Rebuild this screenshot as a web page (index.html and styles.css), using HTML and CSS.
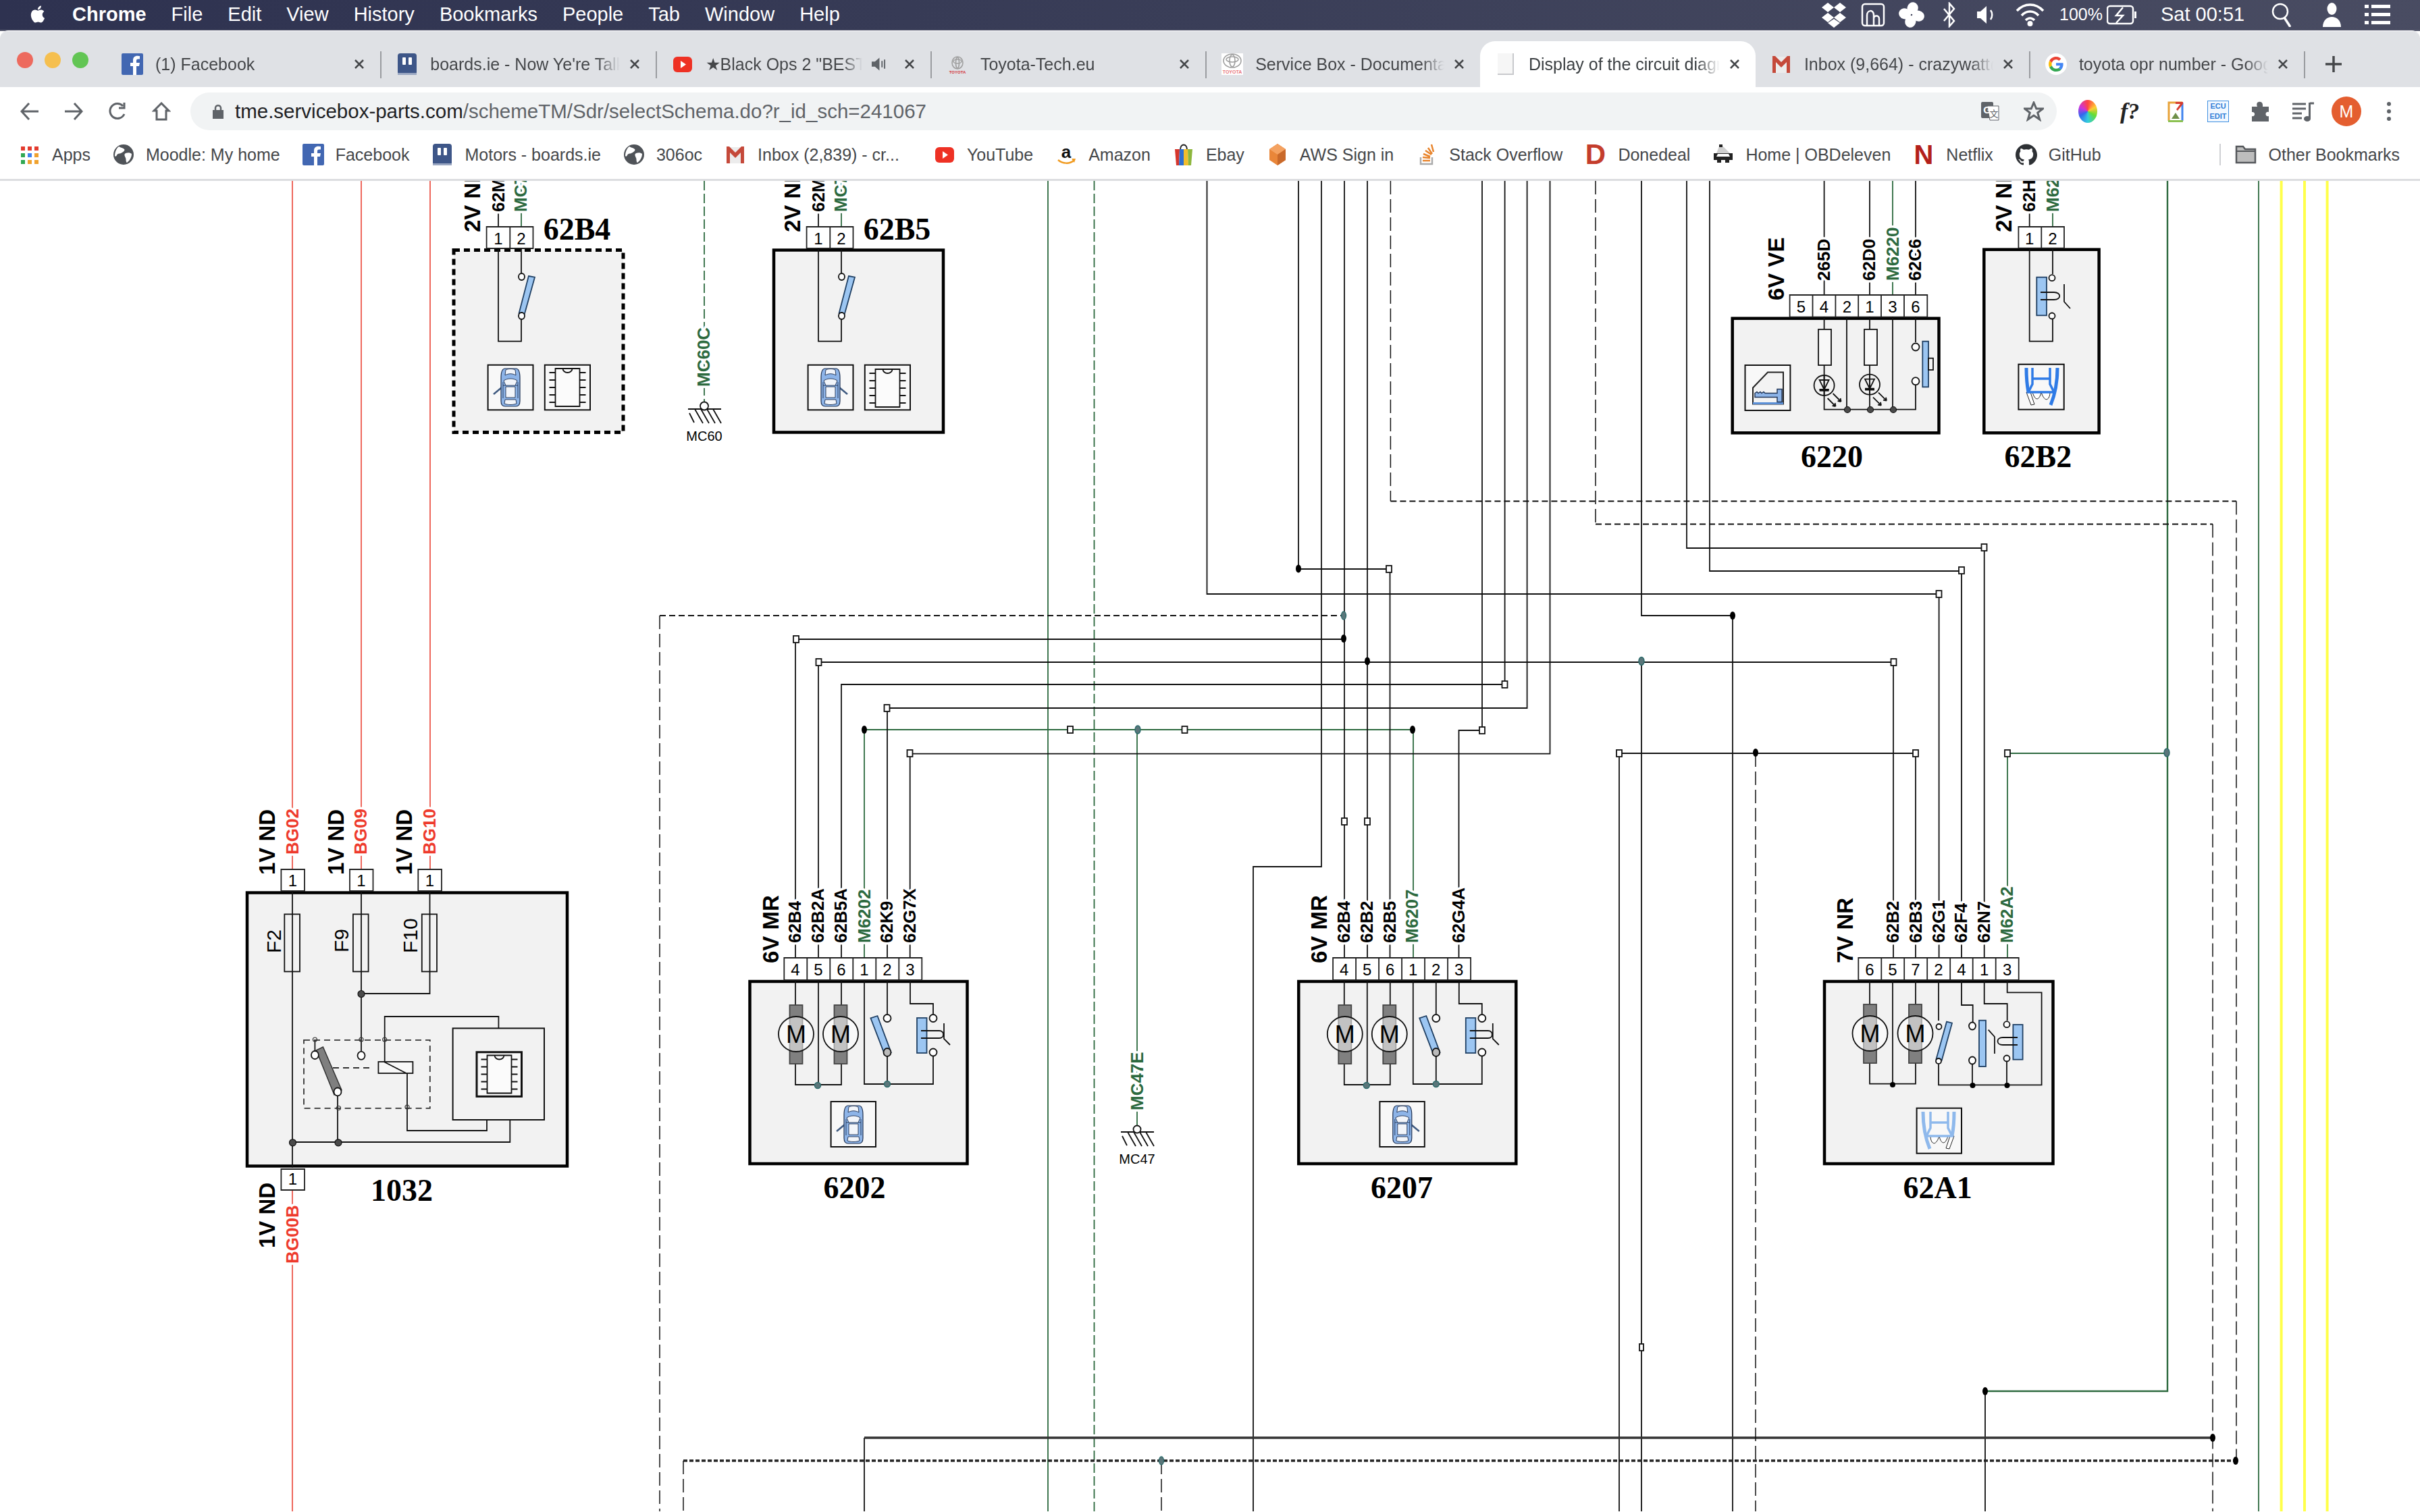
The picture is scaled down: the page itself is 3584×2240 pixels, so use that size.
FILE: index.html
```html
<!DOCTYPE html>
<html lang="en">
<head>
<meta charset="utf-8">
<title>Display of the circuit diagram</title>
<link rel="stylesheet" href="styles.css">
</head>
<body>
<svg class="sprite" aria-hidden="true">
  <symbol id="i-fb" viewBox="0 0 32 32"><rect width="32" height="32" rx="2" fill="#4267b2"/><path fill="#fff" d="M22 32V19h4l1-5h-5v-3c0-1.500.6-2.500 2.500-2.500H27V4c-.6 0-2-.3-3.700-.3C19.500 3.700 17 6 17 10.200V14h-4v5h4v13z"/></symbol>
  <symbol id="i-boards" viewBox="0 0 32 32"><rect x="2" width="28" height="32" rx="4" fill="#3e5688"/><rect x="2" y="29" width="28" height="3" fill="#9aa7c2"/><rect x="9" y="6" width="5" height="11" rx="1" fill="#fff"/><rect x="18" y="6" width="5" height="11" rx="1" fill="#fff"/></symbol>
  <symbol id="i-yt" viewBox="0 0 32 32"><rect x="2" y="5" width="28" height="23" rx="6" fill="#ee3124"/><path fill="#fff" d="M13 11l8 5.500-8 5.500z"/></symbol>
  <symbol id="i-globe" viewBox="0 0 32 32"><circle cx="16" cy="16" r="15" fill="#4f5358"/><path fill="#fff" d="M9 4c3 2 6 2 8 4s-3 5-5 6-5 0-6 3c-1 2-2 2-3 1 0-5 2-11 6-14zM19 14c3-1 7-1 9 1 0 5-3 10-7 13-2-1-1-5-2-7-1-3-3-5 0-7z"/></symbol>
  <symbol id="i-gmail" viewBox="0 0 32 32"><path fill="#ececec" d="M4 5h24v24H4z"/><path fill="#c5493a" d="M3 4h4l9 9 9-9h4v25h-5V13l-8 8-8-8v16H3z"/></symbol>
  <symbol id="i-google" viewBox="0 0 32 32"><circle cx="16" cy="16" r="16" fill="#fff"/><g transform="translate(5 5) scale(.46)"><path fill="#EA4335" d="M24 9.500c3.540 0 6.710 1.220 9.210 3.600l6.850-6.850C35.900 2.380 30.470 0 24 0 14.620 0 6.510 5.380 2.560 13.220l7.980 6.190C12.430 13.720 17.740 9.500 24 9.500z"/><path fill="#4285F4" d="M46.980 24.550c0-1.570-.15-3.090-.38-4.550H24v9.020h12.940c-.58 2.960-2.260 5.480-4.780 7.180l7.730 6c4.510-4.180 7.090-10.360 7.090-17.650z"/><path fill="#FBBC05" d="M10.530 28.590c-.48-1.450-.76-2.990-.76-4.590s.27-3.140.76-4.590l-7.980-6.190C.92 16.460 0 20.120 0 24c0 3.880.92 7.540 2.560 10.780l7.970-6.190z"/><path fill="#34A853" d="M24 48c6.480 0 11.930-2.130 16.030-5.810l-7.730-6c-2.150 1.450-4.920 2.300-8.300 2.300-6.260 0-11.570-4.220-13.470-9.910l-7.980 6.190C6.510 42.620 14.620 48 24 48z"/></g></symbol>
  <symbol id="i-page" viewBox="0 0 32 32"><path fill="#f6f6f6" d="M4 0h22v32H4z"/><path fill="#c8c9cc" d="M26 0h2v32H4v-2h22z"/></symbol>
  <symbol id="i-apps" viewBox="0 0 32 32"><path fill="#e33b2e" d="M3 4h6v6H3zM13 4h6v6h-6zM23 4h6v6h-6z"/><path fill="#f0a22e" d="M23 14h6v6h-6zM23 24h6v6h-6zM13 24h6v6h-6z"/><path fill="#3f83ee" d="M13 14h6v6h-6z"/><path fill="#30a853" d="M3 14h6v6H3zM3 24h6v6H3z"/></symbol>
  <symbol id="i-ebay" viewBox="0 0 32 32"><path fill="none" stroke="#222" stroke-width="2" d="M11 9c0-10 10-10 10 0"/><path fill="#d6362c" d="M3 8h7l-1 24H5z"/><path fill="#2f6fd0" d="M10 8h6v24H9z"/><path fill="#f2bd2c" d="M16 8h6l1 24h-7z"/><path fill="#8cb63c" d="M22 8h7l-2 24h-4z"/></symbol>
  <symbol id="i-aws" viewBox="0 0 32 32"><path fill="#e98639" d="M16 0l12 8v16l-12 8L4 24V8z"/><path fill="#f4a261" d="M16 0l12 8-12 8L4 8z"/><path fill="#c9692a" d="M16 16v16l12-8V8z"/></symbol>
  <symbol id="i-stack" viewBox="0 0 32 32"><path fill="none" stroke="#e8842c" stroke-width="2.500" d="M10 25h11M10 20l11 1M11 15l10 4M14 10l9 6M18 6l6 9M23 1l3 11"/><path fill="none" stroke="#aaa" stroke-width="2.500" d="M7 20v10h17V20"/></symbol>
  <symbol id="i-obd" viewBox="0 0 32 32"><path fill="#cfcfcf" d="M10 4h6l10 10H6z"/><path fill="#222" d="M10 1h5v4h-5zM2 14h28v10H2zM7 24h6v4H7zM19 24h6v4h-6z"/><path fill="#fff" d="M8 15h16l2 4H6z"/></symbol>
  <symbol id="i-gh" viewBox="0 0 24 24"><path fill="#2e3135" d="M12 .297c-6.630 0-12 5.373-12 12 0 5.303 3.438 9.800 8.205 11.385.6.113.82-.258.82-.577 0-.285-.01-1.040-.015-2.040-3.338.724-4.042-1.610-4.042-1.610C4.422 18.070 3.633 17.700 3.633 17.700c-1.087-.744.084-.729.084-.729 1.205.084 1.838 1.236 1.838 1.236 1.070 1.835 2.809 1.305 3.495.998.108-.776.417-1.305.76-1.605-2.665-.3-5.466-1.332-5.466-5.930 0-1.310.465-2.380 1.235-3.220-.135-.303-.54-1.523.105-3.176 0 0 1.005-.322 3.300 1.230.96-.267 1.980-.399 3-.405 1.020.006 2.040.138 3 .405 2.280-1.552 3.285-1.230 3.285-1.230.645 1.653.24 2.873.12 3.176.765.84 1.230 1.910 1.230 3.220 0 4.610-2.805 5.625-5.475 5.920.42.36.81 1.096.81 2.220 0 1.606-.015 2.896-.015 3.286 0 .315.21.69.825.57C20.565 22.092 24 17.592 24 12.297c0-6.627-5.373-12-12-12"/></symbol>
  <symbol id="i-folder" viewBox="0 0 32 32"><path fill="#bdbdbd" stroke="#55585c" stroke-width="2.500" d="M2 4h10l3 4h15v20H2z"/><path fill="none" stroke="#55585c" stroke-width="2" d="M2 11h28"/></symbol>
</svg>

<header class="menubar">
  <svg class="apple" viewBox="0 0 24 24"><path d="M18.710 19.500c-.83 1.240-1.710 2.450-3.050 2.470-1.340.03-1.770-.79-3.290-.79-1.530 0-2 .77-3.270.82-1.310.05-2.300-1.320-3.140-2.530C4.250 17 2.940 12.450 4.700 9.390c.87-1.520 2.430-2.480 4.120-2.510 1.280-.02 2.500.87 3.290.87.78 0 2.260-1.070 3.810-.91.65.03 2.470.26 3.640 1.980-.09.06-2.170 1.280-2.150 3.810.03 3.020 2.650 4.030 2.680 4.040-.03.07-.42 1.440-1.380 2.830M13 3.500c.73-.83 1.940-1.460 2.940-1.500.13 1.170-.34 2.350-1.040 3.190-.69.85-1.830 1.510-2.950 1.420-.15-1.150.41-2.350 1.050-3.110z"/></svg>
  <nav class="menus">
    <span class="menu-app">Chrome</span><span>File</span><span>Edit</span><span>View</span><span>History</span><span>Bookmarks</span><span>People</span><span>Tab</span><span>Window</span><span>Help</span>
  </nav>
  <div class="status">
    <svg class="st st-drop" viewBox="0 0 38 38"><path d="M10 1l9 7-9 7-9-7zM28 1l9 7-9 7-9-7zM10 16l9 7-9 7-9-7zM28 16l9 7-9 7-9-7zM19 25l9 6-9 7-9-7z"/></svg>
    <svg class="st st-air" viewBox="0 0 36 36"><rect class="ln" x="2" y="2" width="32" height="32" rx="4"/><path class="ln" d="M9 34V19c0-9 10-9 10-1v16M19 34V24c0-6 8-6 8 0v10"/></svg>
    <svg class="st st-fan" viewBox="0 0 38 38"><ellipse cx="18" cy="9" rx="8" ry="9" transform="rotate(15 19 19)"/><ellipse cx="18" cy="9" rx="8" ry="9" transform="rotate(105 19 19)"/><ellipse cx="18" cy="9" rx="8" ry="9" transform="rotate(195 19 19)"/><ellipse cx="18" cy="9" rx="8" ry="9" transform="rotate(285 19 19)"/></svg>
    <svg class="st st-bt" viewBox="0 0 20 38"><path class="ln" d="M2 10l15 18-7 8V2l7 8L2 28"/></svg>
    <svg class="st st-vol" viewBox="0 0 27 30"><path d="M0 10h5l9-8v26l-9-8H0z"/><path class="ln" d="M20 8c3 4 3 10 0 14"/></svg>
    <svg class="st st-wifi" viewBox="0 0 43 36"><path class="ln3" d="M2 12c11-12 28-12 39 0M9 19c7-8 18-8 25 0M15 26c4-4 9-4 13 0"/><circle cx="21.500" cy="31" r="4"/></svg>
    <span class="st-pct">100%</span>
    <svg class="st st-bat" viewBox="0 0 45 30"><rect class="ln" x="1" y="2" width="38" height="26" rx="4"/><rect x="41" y="10" width="3" height="10"/><path class="ln" fill="none" d="M24 4L14 16h10L14 27"/></svg>
    <span class="st-clock">Sat 00:51</span>
    <svg class="st st-search" viewBox="0 0 29 36"><circle class="ln" cx="13" cy="13" r="11"/><path class="ln3" d="M19 22l9 14"/></svg>
    <svg class="st st-user" viewBox="0 0 27 36"><ellipse cx="13.500" cy="9" rx="7" ry="9"/><path d="M0 36c0-20 27-20 27 0z"/></svg>
    <svg class="st st-list" viewBox="0 0 38 32"><path d="M0 1h6v5H0zM10 1h28v5H10zM0 13h6v5H0zM10 13h28v5H10zM0 25h6v5H0zM10 25h28v5H10z"/></svg>
  </div>
</header>

<div class="tabstrip">
  <div class="lights"><i class="l-red"></i><i class="l-yel"></i><i class="l-grn"></i></div>
  <div class="tab"><svg class="tab-ic"><use href="#i-fb"/></svg><span class="tab-title">(1) Facebook</span><svg class="tab-x" viewBox="0 0 16 16"><path d="M2 2l12 12M14 2L2 14"/></svg></div><i class="tab-sep"></i>
  <div class="tab"><svg class="tab-ic"><use href="#i-boards"/></svg><span class="tab-title">boards.ie - Now Ye're Talking</span><svg class="tab-x" viewBox="0 0 16 16"><path d="M2 2l12 12M14 2L2 14"/></svg></div><i class="tab-sep"></i>
  <div class="tab"><svg class="tab-ic"><use href="#i-yt"/></svg><span class="tab-title">★Black Ops 2 "BEST CLASS"</span><svg class="tab-spk" viewBox="0 0 22 20"><path d="M0 6h5l7-6v20l-7-6H0z"/><path d="M15 5h2v10h-2zM19 3h2v14h-2z"/></svg><svg class="tab-x" viewBox="0 0 16 16"><path d="M2 2l12 12M14 2L2 14"/></svg></div><i class="tab-sep"></i>
  <div class="tab"><svg class="tab-ic" viewBox="0 0 32 32"><ellipse class="ty" cx="16" cy="14" rx="8" ry="9"/><ellipse class="ty" cx="16" cy="12" rx="6" ry="3"/><ellipse class="ty" cx="16" cy="14" rx="2.500" ry="8"/><text class="toyota" x="16" y="30">TOYOTA</text></svg><span class="tab-title">Toyota-Tech.eu</span><svg class="tab-x" viewBox="0 0 16 16"><path d="M2 2l12 12M14 2L2 14"/></svg></div><i class="tab-sep"></i>
  <div class="tab tab-sb"><svg class="tab-ic tab-white" viewBox="0 0 32 32"><ellipse class="ty" cx="16" cy="11" rx="13" ry="10"/><ellipse class="ty" cx="16" cy="9" rx="9" ry="4"/><ellipse class="ty" cx="16" cy="11" rx="4" ry="9"/><text class="toyota toyota-l" x="16" y="30">TOYOTA</text></svg><span class="tab-title">Service Box - Documentation</span><svg class="tab-x" viewBox="0 0 16 16"><path d="M2 2l12 12M14 2L2 14"/></svg></div>
  <div class="tab tab-active"><svg class="tab-ic"><use href="#i-page"/></svg><span class="tab-title">Display of the circuit diagram</span><svg class="tab-x" viewBox="0 0 16 16"><path d="M2 2l12 12M14 2L2 14"/></svg></div>
  <div class="tab tab-mail"><svg class="tab-ic"><use href="#i-gmail"/></svg><span class="tab-title">Inbox (9,664) - crazywatt@gmail</span><svg class="tab-x" viewBox="0 0 16 16"><path d="M2 2l12 12M14 2L2 14"/></svg></div><i class="tab-sep"></i>
  <div class="tab"><svg class="tab-ic"><use href="#i-google"/></svg><span class="tab-title">toyota opr number - Google</span><svg class="tab-x" viewBox="0 0 16 16"><path d="M2 2l12 12M14 2L2 14"/></svg></div><i class="tab-sep"></i>
  <svg class="tab-plus" viewBox="0 0 24 24"><path d="M12 0v24M0 12h24"/></svg>
</div>

<div class="toolbar">
  <svg class="nav" viewBox="0 0 28 28"><path d="M27 14H2M13 2L2 14l11 12"/></svg>
  <svg class="nav" viewBox="0 0 28 28"><path d="M1 14h25M15 2l11 12-11 12"/></svg>
  <svg class="nav" viewBox="0 0 28 28"><path d="M24 18A11 11 0 1 1 22 6M24 1v8h-8"/></svg>
  <svg class="nav" viewBox="0 0 28 28"><path d="M14 2L3 13h4v13h14V13h4z"/></svg>
  <div class="omni">
    <svg class="lock" viewBox="0 0 16 22"><path class="lock-b" d="M0 9h16v13H0z"/><path class="lock-s" d="M4 9V6c0-5 8-5 8 0v3"/></svg>
    <span class="url"><b>tme.servicebox-parts.com</b>/schemeTM/Sdr/selectSchema.do?r_id_sch=241067</span>
    <svg class="omni-tr" viewBox="0 0 28 28"><rect x="1" y="0" width="18" height="24" rx="2" fill="#5f6368"/><path fill="#fff" stroke="#5f6368" d="M10 6h17v21H14z"/><text class="tr-g" x="10" y="17">G</text><text class="tr-z" x="20" y="22">文</text></svg>
    <svg class="omni-star" viewBox="0 0 30 30"><path d="M15 2l3.800 9h9.700l-7.800 6 3 10L15 21 6.300 27l3-10L1.500 11h9.700z"/></svg>
  </div>
  <div class="ext">
    <i class="wheel"></i>
    <span class="fq">f?</span>
    <svg class="ex ex-img" viewBox="0 0 32 32"><path fill="none" stroke="#e8a33a" stroke-width="3" d="M6 30V3h20"/><path fill="none" stroke="#3f83ee" stroke-width="3" d="M26 3v27"/><path fill="#d63b2e" d="M16 2h11v3l-8 10-2-2 6-8h-7z"/><path fill="#8cc152" d="M5 29h22v3H5z"/><path fill="#6f8f47" d="M10 27l6-9 6 9z"/></svg>
    <div class="ecu"><span>ECU</span><span>EDIT</span></div>
    <svg class="ex" viewBox="0 0 32 32"><path fill="#5f6368" d="M11 3c5-3 9 0 8 6h9v8c-6-2-6 8 0 6v8H3v-8c5 2 6-7 0-6V9h8c-1-2-1-4 0-6z"/></svg>
    <svg class="ex" viewBox="0 0 32 32"><path fill="none" stroke="#5f6368" stroke-width="3" d="M0 5h20M0 12h20M0 19h14M0 26h14M26 4h6"/><path fill="#5f6368" d="M24 3h3v24h-3z"/><ellipse cx="22" cy="27" rx="5" ry="4" fill="#5f6368"/></svg>
    <span class="avatar">M</span>
    <svg class="dots" viewBox="0 0 6 28"><circle cx="3" cy="3" r="3"/><circle cx="3" cy="14" r="3"/><circle cx="3" cy="25" r="3"/></svg>
  </div>
</div>

<nav class="bookmarks">
  <a class="bm"><svg><use href="#i-apps"/></svg>Apps</a>
  <a class="bm"><svg><use href="#i-globe"/></svg>Moodle: My home</a>
  <a class="bm"><svg><use href="#i-fb"/></svg>Facebook</a>
  <a class="bm"><svg><use href="#i-boards"/></svg>Motors - boards.ie</a>
  <a class="bm"><svg><use href="#i-globe"/></svg>306oc</a>
  <a class="bm bm-inbox"><svg><use href="#i-gmail"/></svg>Inbox (2,839) - cr...</a>
  <a class="bm"><svg><use href="#i-yt"/></svg>YouTube</a>
  <a class="bm"><svg viewBox="0 0 32 32"><text class="amazon" x="16" y="21">a</text><path fill="none" stroke="#f09a1e" stroke-width="2.500" d="M4 24c7 6 17 6 23 1"/><path fill="#f09a1e" d="M24 22l6 0-2 6z"/></svg>Amazon</a>
  <a class="bm"><svg><use href="#i-ebay"/></svg>Ebay</a>
  <a class="bm"><svg><use href="#i-aws"/></svg>AWS Sign in</a>
  <a class="bm"><svg><use href="#i-stack"/></svg>Stack Overflow</a>
  <a class="bm"><svg viewBox="0 0 32 32"><text class="done" x="16" y="30">D</text></svg>Donedeal</a>
  <a class="bm"><svg><use href="#i-obd"/></svg>Home | OBDeleven</a>
  <a class="bm"><svg viewBox="0 0 32 32"><text class="netflix" x="16" y="30">N</text></svg>Netflix</a>
  <a class="bm"><svg><use href="#i-gh"/></svg>GitHub</a>
  <i class="bm-sep"></i>
  <a class="bm bm-other"><svg><use href="#i-folder"/></svg>Other Bookmarks</a>
</nav>

<main class="page">
<svg class="schema" viewBox="0 269 3584 1971" xmlns="http://www.w3.org/2000/svg">
  <defs>
    <g id="car">
      <path class="door" d="M-25 10L-13 0"/>
      <path class="c-body" d="M-8-28C-12-28-14-23-14-14V20C-14 26-12 28-8 28H8C12 28 14 26 14 20V-14C14-23 12-28 8-28Z"/>
      <path class="c-win" d="M-7-26C-4-28 4-28 7-26L8-18C3-21-3-21-8-18ZM-10-10C-5-14 5-14 10-10L7-3H-7ZM-7-1H7V15H-7ZM-8 18H8L9 24C4 26-4 26-9 24Z"/>
      <path class="c-ln" d="M-11-8V16M11-8V16M-11-3H-7M7-3H11"/>
    </g>
    <g id="car-r">
      <path class="door" d="M25 10L13 0"/>
      <path class="c-body" d="M-8-28C-12-28-14-23-14-14V20C-14 26-12 28-8 28H8C12 28 14 26 14 20V-14C14-23 12-28 8-28Z"/>
      <path class="c-win" d="M-7-26C-4-28 4-28 7-26L8-18C3-21-3-21-8-18ZM-10-10C-5-14 5-14 10-10L7-3H-7ZM-7-1H7V15H-7ZM-8 18H8L9 24C4 26-4 26-9 24Z"/>
      <path class="c-ln" d="M-11-8V16M11-8V16M-11-3H-7M7-3H11"/>
    </g>
    <g id="chip">
      <path class="notch" d="M-18-28H18V28H-18Z"/>
      <path class="w" d="M-7-28A7 6 0 0 0 7-28M-18-22H-27M-18-11H-27M-18 0H-27M-18 11H-27M-18 22H-27M18-22H27M18-11H27M18 0H27M18 11H27M18 22H27"/>
    </g>
    <g id="seat">
      <path class="s-thin" d="M16 8L22 8L15 27L10 26ZM-13 8C-13 18-6 26 0 8C2 18 8 24 13 8"/>
      <path class="s-blue" d="M-24-28C-24-10-21 10-14 27M22-28C22-12 21-2 19 8"/>
      <path class="s-mid" d="M-13-28V-4L-19 8H19L13-4V-28M-13-12H13"/>
    </g>
    <g id="ground">
      <path class="w" d="M-24 0H25M-22 6L-15 20M-14 0L-2 21M-5 0L7 21M4 0L16 21M13 0L25 21"/>
    </g>
    <g id="motor">
      <rect class="m-core" x="-9.500" y="-43" width="19" height="87"/>
      <circle class="m-ring" r="26"/>
    </g>
    <g id="led">
      <circle class="c-w" r="15"/>
      <path class="w" d="M0-15V15M-7-8H7L0 6ZM-7 6H7"/>
      <path class="led-bar" d="M-7 7H7"/>
      <path class="w" d="M13 12L25 24M5 19L17 31M25 24l-5-1M25 24l-1-5M17 31l-5-1M17 31l-1-5"/>
    </g>
    <g id="mr-unit">
      <rect class="box" x="1110.500" y="1455" width="322" height="270"/>
      <path class="pin" d="M1161.300 1420h34v33h-34zM1195.300 1420h34v33h-34zM1229.300 1420h34v33h-34zM1263.300 1420h34v33h-34zM1297.300 1420h34v33h-34zM1331.300 1420h34v33h-34z"/>
      <path class="w" d="M1178 1453V1490M1246 1453V1490M1178 1576V1608H1246V1576M1212 1453V1608M1280 1453V1607H1382V1566M1314 1453V1503M1314 1566V1607M1348 1453V1488H1382V1503"/>
      <use href="#motor" x="1179" y="1533"/><use href="#motor" x="1245" y="1533"/>
      <circle class="nt" cx="1211" cy="1609" r="4.500"/><circle class="nt" cx="1314" cy="1607" r="4.500"/>
      <path class="blue" d="M1289.400 1509.300L1299.500 1506L1319.700 1560L1309.600 1561.700Z"/>
      <ellipse class="c-o" cx="1314" cy="1509.500" rx="5.500" ry="5.500"/><ellipse class="c-o c-s" cx="1314" cy="1560" rx="5.500" ry="6"/>
      <ellipse class="c-o" cx="1382" cy="1509.500" rx="5.500" ry="5.500"/><ellipse class="c-o" cx="1382" cy="1560" rx="5.500" ry="5.500"/>
      <rect class="blue" x="1358" y="1509" width="14.500" height="52"/>
      <path class="w" d="M1364 1528H1391C1399 1528 1399 1539 1391 1539H1364M1398 1517V1540L1407 1549"/>
      <rect class="icb" x="1230.600" y="1633" width="66.400" height="67"/>
    </g>
  </defs>

  <path class="y" d="M3378.600 269V2240M3413 269V2240M3446.600 269V2240"/>
  <path class="r" d="M433 269V1290M535 269V1290M637 269V1290M433 1764V2240"/>
  <path class="g" d="M1552 269V2240M3345 269V2240M1280 1082H2093M1280 1082V1420M2093 1082V1420M1684 1082V1670M2973 1117H3210M2973 1117V1420M772 269V337M1246 269V337M3040 269V337M2803 269V438"/>
  <path class="g g-t" d="M3210 269V2062H2940"/>
  <path class="g gd" d="M1620.500 269V2240M1043 269V597"/>
  <path class="w" d="M1787.500 269V881H2871.600V1420M1957 269V1285H1856V2240M1923 269V844H2058.500V1420M1991 269V1420M2025 269V1420M2195 269V1083H2160.500V1420M2228.600 269V1015H1246V1420M2261.600 269V1050H1314V1420M2295.500 269V1117.700H1347.700V1420M1178 948H1991M1178 948V1420M1212 982H2804V1420M1212 982V1420M2498 269V813H2938.700V1420M2532 269V847H2905V1420M2431 269V913H2566V2240M2431 981V2240M2398 2240V1117H2837V1420M2701.600 269V438M2769 269V438M2837 269V438M738 269V337M1212 269V337M3005.700 269V337M1280 2131V2240M2940 2062V2240"/>
  <path class="bus" d="M1280 2131H3278"/>
  <path class="dv" d="M2059.400 269V743.500M3312 743.500V2165M2363 269V777.600M3277 777.600V2240M977 913V2240M1012 2165V2240M1720 2165V2240M2600 1117V2240"/>
  <path class="dh" d="M2059.400 743.500H3312M2363 777.600H3277M977 913H1990"/>
  <path class="dh dh-t" d="M1012 2165H3311"/>

  <g class="sq-all">
    <rect x="1175" y="943" width="8" height="10"/><rect x="1208.500" y="977" width="8" height="10"/><rect x="1309.500" y="1045" width="8" height="10"/><rect x="1343.500" y="1112" width="8" height="10"/><rect x="2224.500" y="1010" width="8" height="10"/><rect x="2191" y="1078" width="8" height="10"/><rect x="2053" y="839" width="8" height="10"/><rect x="2867.500" y="876" width="8" height="10"/><rect x="2800.500" y="977" width="8" height="10"/><rect x="2901" y="841" width="8" height="10"/><rect x="2934.500" y="807" width="8" height="10"/><rect x="2394" y="1112" width="8" height="10"/><rect x="2833" y="1112" width="8" height="10"/><rect x="2969" y="1112" width="8" height="10"/><rect x="1581" y="1077" width="8" height="10"/><rect x="1750.500" y="1077" width="8" height="10"/><rect x="1987" y="1213" width="8" height="10"/><rect x="2021" y="1213" width="8" height="10"/><rect x="2428" y="1992" width="6" height="10"/>
  </g>
  <g class="nb-all">
    <ellipse cx="1923" cy="843.500" rx="4" ry="6"/><ellipse cx="1990" cy="947" rx="4" ry="6"/><ellipse cx="2025" cy="980.500" rx="4" ry="6"/><ellipse cx="1280" cy="1082" rx="4" ry="6"/><ellipse cx="2092" cy="1082" rx="4" ry="6"/><ellipse cx="2566" cy="913" rx="4" ry="6"/><ellipse cx="2600" cy="1116" rx="4" ry="6"/><ellipse cx="2940" cy="2062" rx="4" ry="6"/><ellipse cx="3277" cy="2131" rx="4" ry="6"/><ellipse cx="3311" cy="2165" rx="4" ry="6"/>
  </g>
  <g class="nt-all">
    <ellipse cx="1990" cy="913" rx="3.500" ry="6"/><ellipse cx="1685" cy="1082" rx="4" ry="6"/><ellipse cx="2431" cy="980.500" rx="4" ry="6"/><ellipse cx="3209" cy="1116" rx="4" ry="6"/><ellipse cx="1720" cy="2165" rx="3.500" ry="6"/>
  </g>

  <!-- 62B4 -->
  <rect class="box box-d" x="672" y="371.500" width="251" height="270"/>
  <path class="pin" d="M720.600 337h34.700v32h-34.700zM755.300 337h34.200v32h-34.200z"/>
  <text class="no" x="738" y="363">1</text><text class="no" x="772" y="363">2</text>
  <path class="w" d="M738 369V506.700H772V473M772 369V406"/>
  <path class="blue" d="M782.900 410L792 411.700L776.700 466.700L768.600 465Z"/>
  <ellipse class="c-o" cx="772.500" cy="411" rx="4.500" ry="5"/><ellipse class="c-o" cx="772.500" cy="469" rx="4.500" ry="5"/>
  <rect class="icb" x="722.600" y="541.700" width="66.900" height="66.600"/>
  <use href="#car" x="756" y="575"/>
  <rect class="icb" x="806.800" y="541.700" width="67.200" height="66.600"/>
  <use href="#chip" x="840.500" y="575"/>
  <text class="hd" transform="translate(711.400 345) rotate(-90)">2V ND</text>
  <text class="lb" transform="translate(747 315) rotate(-90)">62M0</text>
  <text class="lb lg" transform="translate(780 315) rotate(-90)">MC7</text>
  <text class="tt" x="854.500" y="356">62B4</text>

  <!-- 62B5 -->
  <rect class="box" x="1146" y="371.500" width="251" height="270"/>
  <path class="pin" d="M1194.600 337h34.700v32h-34.700zM1229.300 337h34.200v32h-34.200z"/>
  <text class="no" x="1212" y="363">1</text><text class="no" x="1246" y="363">2</text>
  <path class="w" d="M1212 369V506.700H1246V473M1246 369V406"/>
  <path class="blue" d="M1256.900 410L1266 411.700L1250.700 466.700L1242.600 465Z"/>
  <ellipse class="c-o" cx="1246.500" cy="411" rx="4.500" ry="5"/><ellipse class="c-o" cx="1246.500" cy="469" rx="4.500" ry="5"/>
  <rect class="icb" x="1196.600" y="541.700" width="66.900" height="66.600"/>
  <use href="#car-r" x="1230" y="575"/>
  <rect class="icb" x="1280.800" y="541.700" width="67.200" height="66.600"/>
  <use href="#chip" x="1314.500" y="576"/>
  <text class="hd" transform="translate(1185.400 345) rotate(-90)">2V ND</text>
  <text class="lb" transform="translate(1221 315) rotate(-90)">62M1</text>
  <text class="lb lg" transform="translate(1254 315) rotate(-90)">MC7</text>
  <text class="tt" x="1328.500" y="356">62B5</text>

  <!-- MC60 -->
  <use href="#ground" x="1043" y="607"/>
  <circle class="c-o" cx="1043" cy="602.500" r="6"/>
  <text class="lb lg" transform="translate(1050.700 574) rotate(-90)">MC60C</text>
  <text class="gnd" x="1043" y="654">MC60</text>

  <!-- 6220 -->
  <rect class="box" x="2565.700" y="472.700" width="305.800" height="169.600"/>
  <path class="pin" d="M2650.600 438h33.900v32.700h-33.900zM2684.500 438h33.900v32.700h-33.900zM2718.400 438h33.800v32.700h-33.800zM2752.200 438h33.800v32.700h-33.800zM2786 438h34v32.700h-34zM2820 438h34.300v32.700h-34.300z"/>
  <text class="no" x="2667.500" y="464">5</text><text class="no" x="2701.500" y="464">4</text><text class="no" x="2735.500" y="464">2</text><text class="no" x="2769" y="464">1</text><text class="no" x="2803" y="464">3</text><text class="no" x="2837" y="464">6</text>
  <path class="w" d="M2701.600 470V489M2769 470V489M2735 470V607.700M2803 470V607.700M2701.600 542V607.700H2837V571M2837 470V508M2769 542V607.700"/>
  <rect class="res" x="2693" y="489" width="19" height="53"/><rect class="res" x="2761" y="489" width="19" height="53"/>
  <use href="#led" x="2701.600" y="572"/><use href="#led" x="2769" y="570.700"/>
  <ellipse class="nb-g" cx="2736" cy="608" rx="4.500" ry="4.500"/><ellipse class="nb-g" cx="2770" cy="608" rx="4.500" ry="4.500"/><ellipse class="nb-g" cx="2804" cy="608" rx="4.500" ry="4.500"/>
  <ellipse class="c-o" cx="2837" cy="515" rx="5.500" ry="5.500"/><ellipse class="c-o" cx="2837" cy="565.700" rx="5.500" ry="5.500"/>
  <rect class="blue" x="2847.300" y="506.700" width="8.700" height="67.600"/><rect class="res" x="2856" y="531.700" width="7" height="17.300"/>
  <rect class="icb" x="2584.500" y="542" width="66.900" height="67"/>
  <g transform="translate(2618 575.500)">
    <path class="dr" d="M-22 0L0-23H23V24H-22Z"/><path class="dr-b" d="M-22 23H23"/>
    <path class="key" d="M-19 8l3-2 2 2 3-2 2 2 3-2 2 2H14V2H21V21H14V14H-19Z"/>
  </g>
  <text class="hd" transform="translate(2641.600 446) rotate(-90)">6V VE</text>
  <text class="lb" transform="translate(2709.800 417) rotate(-90)">265D</text>
  <text class="lb" transform="translate(2777 417) rotate(-90)">62D0</text>
  <text class="lb lg" transform="translate(2812 417) rotate(-90)">M6220</text>
  <text class="lb" transform="translate(2844.500 417) rotate(-90)">62C6</text>
  <text class="tt" x="2713" y="692.500">6220</text>

  <!-- 62B2 -->
  <rect class="box" x="2938.300" y="370.700" width="170.300" height="271.600"/>
  <path class="pin" d="M2989.400 337h33.900v31.700h-33.900zM3023.300 337h33.700v31.700h-33.700z"/>
  <text class="no" x="3005.700" y="363">1</text><text class="no" x="3040" y="363">2</text>
  <path class="w" d="M3005.700 369V506.700H3040V472M3040 369V407M3042 434C3053 434 3053 445 3042 445M3057 422V448L3066 458"/>
  <rect class="blue" x="3016.300" y="411.700" width="14.700" height="56.600"/>
  <path class="w" d="M3022 434H3042M3022 445H3042"/>
  <ellipse class="c-o" cx="3039" cy="412.700" rx="4.500" ry="4.500"/><ellipse class="c-o" cx="3039" cy="469" rx="4.500" ry="4.500"/>
  <rect class="icb" x="2989.400" y="540.700" width="67.300" height="67"/>
  <use href="#seat" x="3023" y="574" class="seat-strong" transform="translate(6046 0) scale(-1 1)"/>
  <text class="hd" transform="translate(2979 345) rotate(-90)">2V ND</text>
  <text class="lb" transform="translate(3014 315) rotate(-90)">62H0</text>
  <text class="lb lg" transform="translate(3048.600 315) rotate(-90)">M62</text>
  <text class="tt" x="3018.400" y="692.500">62B2</text>

  <!-- 1032 -->
  <rect class="box" x="366" y="1323.500" width="474" height="405"/>
  <path class="pin" d="M416.400 1289h34.600v32h-34.600zM518 1289h34.500v32H518zM619.300 1289H654v32h-34.700zM416.400 1733H451v31h-34.600z"/>
  <text class="no" x="433.500" y="1314">1</text><text class="no" x="535" y="1314">1</text><text class="no" x="636.500" y="1314">1</text><text class="no" x="433.500" y="1756">1</text>
  <path class="w" d="M433 1321V1731M535 1321V1558M636.500 1321V1473H535M466.400 1541V1558M500 1624V1694M433 1693H755.300V1660M569.700 1574V1507H738.400V1524M603 1591V1676H721V1660"/>
  <rect class="fuse" x="421.300" y="1355.400" width="22.700" height="85"/><rect class="fuse" x="522.900" y="1355.400" width="22.700" height="85"/><rect class="fuse" x="624.800" y="1355.400" width="22.200" height="85"/>
  <rect class="dash-r" x="450" y="1541.800" width="186.800" height="101"/>
  <path class="dash-r" d="M493 1583H553"/>
  <path class="gray" d="M468.400 1557L478.400 1552L506 1616L495 1623Z"/>
  <ellipse class="c-o" cx="466.400" cy="1564" rx="5.500" ry="6"/><ellipse class="c-o" cx="535" cy="1564.800" rx="5.500" ry="6"/><ellipse class="c-o" cx="500" cy="1618.500" rx="5.500" ry="6"/>
  <ellipse class="c-s2" cx="466.400" cy="1541" rx="3" ry="3"/><ellipse class="c-s2" cx="535" cy="1541" rx="3" ry="3"/><ellipse class="c-s2" cx="569.700" cy="1541" rx="3" ry="3"/><ellipse class="c-s2" cx="501.500" cy="1642.500" rx="3" ry="3"/><ellipse class="c-s2" cx="603" cy="1641" rx="3" ry="3"/>
  <rect class="res" x="560.400" y="1574" width="51" height="17"/><path class="w" d="M568.600 1574L601.700 1591"/>
  <rect class="frame" x="670.600" y="1524.400" width="135.400" height="135.600"/>
  <rect class="icb icb-t" x="706" y="1559.700" width="66.500" height="65.700"/>
  <use href="#chip" x="739.500" y="1592.500"/>
  <ellipse class="nb-g" cx="535" cy="1473.500" rx="5" ry="5"/><ellipse class="nb-g" cx="433.500" cy="1693.800" rx="5" ry="5"/><ellipse class="nb-g" cx="501" cy="1693.800" rx="5" ry="5"/>
  <text class="hd" transform="translate(407 1297) rotate(-90)">1V ND</text><text class="hd" transform="translate(508.700 1297) rotate(-90)">1V ND</text><text class="hd" transform="translate(610.300 1297) rotate(-90)">1V ND</text><text class="hd" transform="translate(407 1850) rotate(-90)">1V ND</text>
  <text class="lb lr" transform="translate(441.600 1267) rotate(-90)">BG02</text><text class="lb lr" transform="translate(543 1267) rotate(-90)">BG09</text><text class="lb lr" transform="translate(644.700 1267) rotate(-90)">BG10</text><text class="lb lr" transform="translate(441.600 1873) rotate(-90)">BG00B</text>
  <text class="fu" transform="translate(416 1413) rotate(-90)">F2</text><text class="fu" transform="translate(516.300 1412) rotate(-90)">F9</text><text class="fu" transform="translate(618 1413) rotate(-90)">F10</text>
  <text class="tt" x="595" y="1780">1032</text>

  <!-- 6202 / 6207 -->
  <use href="#mr-unit"/>
  <use href="#car" x="1264" y="1667"/>
  <text class="no" x="1178" y="1446">4</text><text class="no" x="1212" y="1446">5</text><text class="no" x="1246" y="1446">6</text><text class="no" x="1280" y="1446">1</text><text class="no" x="1314" y="1446">2</text><text class="no" x="1348" y="1446">3</text>
  <text class="mot" x="1179" y="1546">M</text><text class="mot" x="1245" y="1546">M</text>
  <text class="hd" transform="translate(1153 1428) rotate(-90)">6V MR</text>
  <text class="lb" transform="translate(1186 1398) rotate(-90)">62B4</text><text class="lb" transform="translate(1220 1398) rotate(-90)">62B2A</text><text class="lb" transform="translate(1254 1398) rotate(-90)">62B5A</text><text class="lb lg" transform="translate(1289 1398) rotate(-90)">M6202</text><text class="lb" transform="translate(1322 1398) rotate(-90)">62K9</text><text class="lb" transform="translate(1355.500 1398) rotate(-90)">62G7X</text>
  <text class="tt" x="1265.500" y="1776">6202</text>

  <use href="#mr-unit" x="812.800"/>
  <use href="#car-r" x="2076.800" y="1667"/>
  <text class="no" x="1990.800" y="1446">4</text><text class="no" x="2024.800" y="1446">5</text><text class="no" x="2058.800" y="1446">6</text><text class="no" x="2092.800" y="1446">1</text><text class="no" x="2126.800" y="1446">2</text><text class="no" x="2160.800" y="1446">3</text>
  <text class="mot" x="1991.800" y="1546">M</text><text class="mot" x="2057.800" y="1546">M</text>
  <text class="hd" transform="translate(1965 1428) rotate(-90)">6V MR</text>
  <text class="lb" transform="translate(1999 1398) rotate(-90)">62B4</text><text class="lb" transform="translate(2033 1398) rotate(-90)">62B2</text><text class="lb" transform="translate(2067 1398) rotate(-90)">62B5</text><text class="lb lg" transform="translate(2100.400 1398) rotate(-90)">M6207</text><text class="lb" transform="translate(2169 1398) rotate(-90)">62G4A</text>
  <text class="tt" x="2076" y="1776">6207</text>

  <!-- 62A1 -->
  <rect class="box" x="2702" y="1455" width="338.500" height="270"/>
  <path class="pin" d="M2752.300 1420h34v33h-34zM2786.300 1420h33.900v33h-33.900zM2820.200 1420h34v33h-34zM2854.200 1420h34v33h-34zM2888.200 1420h33.500v33h-33.500zM2921.700 1420h34v33h-34zM2955.700 1420h34v33h-34z"/>
  <text class="no" x="2769" y="1446">6</text><text class="no" x="2803" y="1446">5</text><text class="no" x="2837" y="1446">7</text><text class="no" x="2871" y="1446">2</text><text class="no" x="2905" y="1446">4</text><text class="no" x="2938.700" y="1446">1</text><text class="no" x="2972.700" y="1446">3</text>
  <path class="w" d="M2769 1453V1489M2837 1453V1489M2769 1574V1606.700H2837V1574M2803 1453V1606.700M2871 1453V1513M2871 1578V1608.300H3023.600V1471.300H2972.700V1453M2905 1453V1490H2921.700V1515M2921 1578V1608M2938.700 1453V1488H2972.700V1513M2972 1574V1608"/>
  <use href="#motor" x="2769.500" y="1532"/><use href="#motor" x="2836.500" y="1532"/>
  <text class="mot" x="2769.500" y="1545">M</text><text class="mot" x="2836.500" y="1545">M</text>
  <circle class="nb" cx="2803" cy="1608" r="4"/><circle class="nb" cx="2921.500" cy="1609" r="4"/><circle class="nb" cx="2972.500" cy="1609" r="4"/>
  <path class="blue" d="M2883 1514.700L2891 1516.700L2875.800 1571.700L2867.500 1570Z"/>
  <ellipse class="c-o" cx="2871.500" cy="1522" rx="4" ry="4"/><ellipse class="c-o" cx="2871" cy="1573" rx="4" ry="4"/>
  <ellipse class="c-o" cx="2921" cy="1521" rx="5" ry="5.500"/><ellipse class="c-o" cx="2921" cy="1572" rx="5" ry="5.500"/>
  <ellipse class="c-o" cx="2972" cy="1518.700" rx="4.500" ry="4.500"/><ellipse class="c-o" cx="2972" cy="1569" rx="4.500" ry="4.500"/>
  <rect class="blue" x="2931" y="1512.700" width="10" height="68.300"/><rect class="blue" x="2981.400" y="1519" width="14.200" height="51.700"/>
  <path class="w" d="M2988 1538H2966C2956 1538 2956 1549 2966 1549H2988M2954 1562V1537L2944.700 1526.700"/>
  <rect class="icb" x="2838.600" y="1642.700" width="66.400" height="67"/>
  <use href="#seat" x="2872" y="1676" class="seat-soft"/>
  <text class="hd" transform="translate(2744 1428) rotate(-90)">7V NR</text>
  <text class="lb" transform="translate(2811.500 1398) rotate(-90)">62B2</text><text class="lb" transform="translate(2846 1398) rotate(-90)">62B3</text><text class="lb" transform="translate(2880 1398) rotate(-90)">62G1</text><text class="lb" transform="translate(2913.400 1398) rotate(-90)">62F4</text><text class="lb" transform="translate(2947 1398) rotate(-90)">62N7</text><text class="lb lg" transform="translate(2980.500 1398) rotate(-90)">M62A2</text>
  <text class="tt" x="2869.600" y="1776">62A1</text>

  <!-- MC47 -->
  <use href="#ground" x="1684" y="1678"/>
  <circle class="c-o" cx="1684" cy="1674" r="5.500"/>
  <text class="lb lg" transform="translate(1693 1646) rotate(-90)">MC47E</text>
  <text class="gnd" x="1684" y="1725">MC47</text>
</svg>
</main>
</body>
</html>
```

FILE: styles.css
```css
* { box-sizing: border-box; }
html, body { margin: 0; height: 100%; }
body {
  width: 3584px;
  height: 2240px;
  overflow: hidden;
  background: #fff;
  font-family: "Liberation Sans", Arial, sans-serif;
  display: flex;
  flex-direction: column;
}
.sprite { position: absolute; width: 0; height: 0; }

/* macOS menu bar */
.menubar {
  flex: 0 0 46px;
  display: flex;
  align-items: center;
  padding: 0 44px 3px 41px;
  color: #fff;
  font-size: 29px;
  background: linear-gradient(90deg, #2e3250 0%, #3a3e58 50%, #494c62 100%);
  box-shadow: inset 0 -2px 0 #55586c;
}
.apple { width: 30px; height: 34px; fill: #fff; margin-top: -2px; }
.menus { display: flex; gap: 37px; margin-left: 36px; }
.menu-app { font-weight: 700; }
.status { margin-left: auto; display: flex; align-items: center; }
.st { fill: #fff; flex: none; }
.st .ln { fill: none; stroke: #fff; stroke-width: 2.500; }
.st .ln3 { fill: none; stroke: #fff; stroke-width: 3.500; }
.st-drop { width: 38px; height: 38px; }
.st-air { width: 36px; height: 36px; margin-left: 21px; }
.st-fan { width: 38px; height: 38px; margin-left: 20px; }
.st-bt { width: 20px; height: 38px; margin-left: 27px; }
.st-vol { width: 27px; height: 30px; margin-left: 31px; }
.st-wifi { width: 43px; height: 36px; margin-left: 30px; }
.st-pct { margin-left: 22px; width: 62px; font-size: 25px; }
.st-bat { width: 45px; height: 30px; margin-left: 8px; }
.st-clock { margin-left: 35px; width: 129px; white-space: nowrap; }
.st-search { width: 29px; height: 36px; margin-left: 35px; }
.st-user { width: 27px; height: 36px; margin-left: 47px; }
.st-list { width: 38px; height: 32px; margin-left: 35px; }

/* Tab strip */
.tabstrip {
  flex: 0 0 84px;
  display: flex;
  align-items: flex-end;
  background: #dfe1e5;
  border-radius: 12px 12px 0 0;
  border-top: 2px solid #e9eaed;
  margin-top: -1px;
}
.lights { flex: 0 0 158px; display: flex; gap: 17px; padding-left: 25px; align-self: flex-start; margin-top: 30px; }
.lights i { width: 24px; height: 24px; border-radius: 50%; }
.l-red { background: #ed6a5e; }
.l-yel { background: #f5bf4f; }
.l-grn { background: #62c554; }
.tab {
  flex: 0 0 405.300px;
  min-width: 0;
  height: 68px;
  display: flex;
  align-items: center;
  padding: 0 23px 0 22px;
  color: #45474a;
  font-size: 25px;
}
.tab-ic { width: 32px; height: 32px; flex: none; }
.tab-white { background: #fff; }
.tab-title {
  flex: 1;
  min-width: 0;
  margin: 0 14px 0 18px;
  white-space: nowrap;
  overflow: hidden;
  -webkit-mask-image: linear-gradient(90deg, #000 88%, transparent 100%);
  mask-image: linear-gradient(90deg, #000 88%, transparent 100%);
}
.tab-x { width: 16px; height: 16px; flex: none; fill: none; stroke: #45474a; stroke-width: 2.500; }
.tab-spk { width: 21px; height: 20px; fill: #5f6368; flex: none; margin-right: 27px; }
.tab-sep { flex: 0 0 2px; height: 40px; margin-bottom: 13px; background: #9a9ca0; }
.tab-sb { flex-basis: 404.700px; }
.tab-active {
  flex-basis: 408px;
  background: #fff;
  border-radius: 22px 22px 0 0;
  color: #3c4043;
}
.tab-mail { flex-basis: 405px; }
.tab-plus { width: 24px; height: 24px; margin: 0 0 22px 30px; fill: none; stroke: #45474a; stroke-width: 3.500; }
.ty { fill: none; stroke: #a0a0a0; stroke-width: 1.600; }
.toyota { font: 700 6px "Liberation Sans", sans-serif; fill: #d2323a; text-anchor: middle; }
.toyota-l { font-size: 7px; fill: #e7757a; }

/* Toolbar */
.toolbar {
  flex: 0 0 64px;
  display: flex;
  align-items: center;
  padding: 8px 0 0 30px;
  background: #fff;
}
.nav { width: 28px; height: 28px; flex: none; fill: none; stroke: #5f6368; stroke-width: 3; margin-right: 37px; }
.omni {
  flex: 0 0 2764px;
  margin-left: -8px;
  height: 56px;
  border-radius: 28px;
  background: #f1f3f4;
  display: flex;
  align-items: center;
  padding: 0 19px 0 33px;
}
.lock { width: 16px; height: 22px; flex: none; margin-right: 17px; }
.lock-b { fill: #5f6368; }
.lock-s { fill: none; stroke: #5f6368; stroke-width: 2.500; }
.url { font-size: 29.500px; color: #5f6368; white-space: nowrap; }
.url b { font-weight: 400; color: #202124; }
.omni-tr { width: 28px; height: 28px; margin-left: auto; flex: none; }
.tr-g { font: 700 15px "Liberation Sans", sans-serif; fill: #fff; text-anchor: middle; }
.tr-z { font: 400 13px "Noto Sans CJK SC", sans-serif; fill: #5f6368; text-anchor: middle; }
.omni-star { width: 30px; height: 30px; margin-left: 36px; flex: none; fill: none; stroke: #5f6368; stroke-width: 3; }
.ext { display: flex; align-items: center; margin-left: 32px; }
.wheel {
  width: 28px; height: 34px; border-radius: 50%; flex: none;
  background: conic-gradient(#f44, #fc3, #6d3, #3cd, #36e, #c3d, #f44);
}
.fq { font: italic 700 34px "Liberation Serif", serif; color: #222; width: 40px; margin-left: 34px; }
.ex { width: 32px; height: 32px; flex: none; margin-left: 31px; }
.ex-img { margin-left: 26px; }
.ecu {
  width: 32px; height: 32px; flex: none; margin-left: 31px;
  display: flex; flex-direction: column; align-items: center; justify-content: space-between;
  border: 1px solid #3f8fe0;
  font: 700 11px/15px "Liberation Sans", sans-serif;
  color: #2f80d8;
  background: #f2f8ff;
}
.avatar {
  width: 44px; height: 44px; border-radius: 50%; flex: none; margin-left: 26px;
  background: #e45e30; color: #fff; font-size: 25px; line-height: 44px; text-align: center;
}
.dots { width: 6px; height: 28px; margin-left: 38px; fill: #5f6368; flex: none; }

/* Bookmarks */
.bookmarks {
  flex: 0 0 75px;
  display: flex;
  align-items: center;
  gap: 33px;
  padding: 0 30px 0 28px;
  border-bottom: 3px solid #dcdde0;
  background: #fff;
  color: #45474a;
  font-size: 25px;
}
.bm { display: flex; align-items: center; gap: 17px; white-space: nowrap; }
.bm svg { width: 32px; height: 32px; flex: none; }
.bm-inbox { margin-right: 18px; }
.bm-sep { width: 2px; height: 32px; background: #cfd0d3; margin-left: auto; }
.bm-other { margin-left: -12px; }
.amazon { font: 700 26px "Liberation Sans", sans-serif; fill: #111; text-anchor: middle; }
.done { font: 700 42px "Liberation Sans", sans-serif; fill: #c43d2c; text-anchor: middle; }
.netflix { font: 700 40px "Liberation Sans", sans-serif; fill: #b3201b; text-anchor: middle; }

/* Schematic */
.page { flex: 1; overflow: hidden; }
.schema { display: block; width: 3584px; height: 1971px; }
.schema text { font-family: "Liberation Sans", Arial, sans-serif; }
.w { fill: none; stroke: #111; stroke-width: 1.800; }
.g { fill: none; stroke: #2d6a3f; stroke-width: 1.800; }
.g-t { stroke-width: 2.400; }
.gd { stroke-dasharray: 14 5; }
.r { fill: none; stroke: #ea4335; stroke-width: 1.600; }
.y { fill: none; stroke: #ffff4a; stroke-width: 4; }
.bus { fill: none; stroke: #333; stroke-width: 3.500; }
.dv { fill: none; stroke: #111; stroke-width: 1.500; stroke-dasharray: 20 7; }
.dh { fill: none; stroke: #111; stroke-width: 2; stroke-dasharray: 9 5; }
.dh-t { stroke-width: 3.500; stroke-dasharray: 6 3; stroke: #222; }
.sq-all rect { fill: #fff; stroke: #111; stroke-width: 1.800; }
.nb-all ellipse, .nb { fill: #000; }
.nt-all ellipse, .nt { fill: #5b767a; stroke: #2a6a6a; stroke-width: 1.400; }
.nb-g { fill: #4a4a4a; stroke: #111; stroke-width: 1.200; }
.box { fill: #f2f2f2; stroke: #000; stroke-width: 4.500; }
.box-d { stroke-dasharray: 9 6; stroke-width: 5; }
.pin { fill: #fff; stroke: #222; stroke-width: 1.800; }
.icb { fill: #f8f8f8; stroke: #111; stroke-width: 2; }
.icb-t { stroke-width: 3; }
.frame { fill: #f2f2f2; stroke: #111; stroke-width: 2; }
.res { fill: #f8f8f8; stroke: #111; stroke-width: 1.800; }
.fuse { fill: none; stroke: #111; stroke-width: 1.800; }
.blue { fill: #9cc6f2; stroke: #1f3f63; stroke-width: 1.800; }
.gray { fill: #7f7f7f; stroke: #333; stroke-width: 1.500; }
.c-o { fill: #fff; stroke: #111; stroke-width: 1.800; }
.c-w { fill: none; stroke: #111; stroke-width: 1.800; }
.c-s { fill: #bbb; }
.c-s2 { fill: none; stroke: #333; stroke-width: 1.200; }
.dash-r { fill: none; stroke: #333; stroke-width: 1.800; stroke-dasharray: 9 6; }
.m-core { fill: #808080; stroke: #444; stroke-width: 1.800; }
.m-ring { fill: rgba(255, 255, 255, .52); stroke: #111; stroke-width: 1.800; }
.mot { font-size: 36px; text-anchor: middle; fill: #000; }
.no { font-size: 24px; text-anchor: middle; fill: #000; }
.hd, .lb { font-weight: 700; fill: #000; paint-order: stroke; stroke: #fff; stroke-linejoin: round; }
.hd { font-size: 33px; stroke-width: 0; }
.lb { font-size: 26px; stroke-width: 7px; }
.lg { fill: #2d6a3f; }
.lr { fill: #ee3a2c; }
.tt { font: 700 46px "Liberation Serif", "Times New Roman", serif !important; text-anchor: middle; fill: #000; }
.gnd { font-size: 20px; text-anchor: middle; fill: #000; }
.fu { font-size: 30px; fill: #000; }
.door { fill: none; stroke: #3f5a80; stroke-width: 2.500; }
.c-body { fill: #8db4e8; stroke: #1d2f4f; stroke-width: 1.200; }
.c-win { fill: #f2f5fa; stroke: #1d2f4f; stroke-width: .9; }
.c-ln { fill: none; stroke: #1d2f4f; stroke-width: .9; }
.notch { fill: #fbfbfb; stroke: #111; stroke-width: 1.800; }
.seat-soft { color: #8fb9ec; }
.seat-strong { color: #2f7be6; }
.s-blue { fill: none; stroke: currentColor; stroke-width: 5; }
.s-mid { fill: none; stroke: currentColor; stroke-width: 3.500; }
.s-thin { fill: #fff; stroke: #222; stroke-width: 1; }
.led-bar { fill: none; stroke: #111; stroke-width: 3.500; }
.dr { fill: #f3f3f3; stroke: #222; stroke-width: 2; }
.dr-b { fill: none; stroke: #5b8fd6; stroke-width: 3; }
.key { fill: #8db4e8; stroke: #24385a; stroke-width: 1.500; }
```
